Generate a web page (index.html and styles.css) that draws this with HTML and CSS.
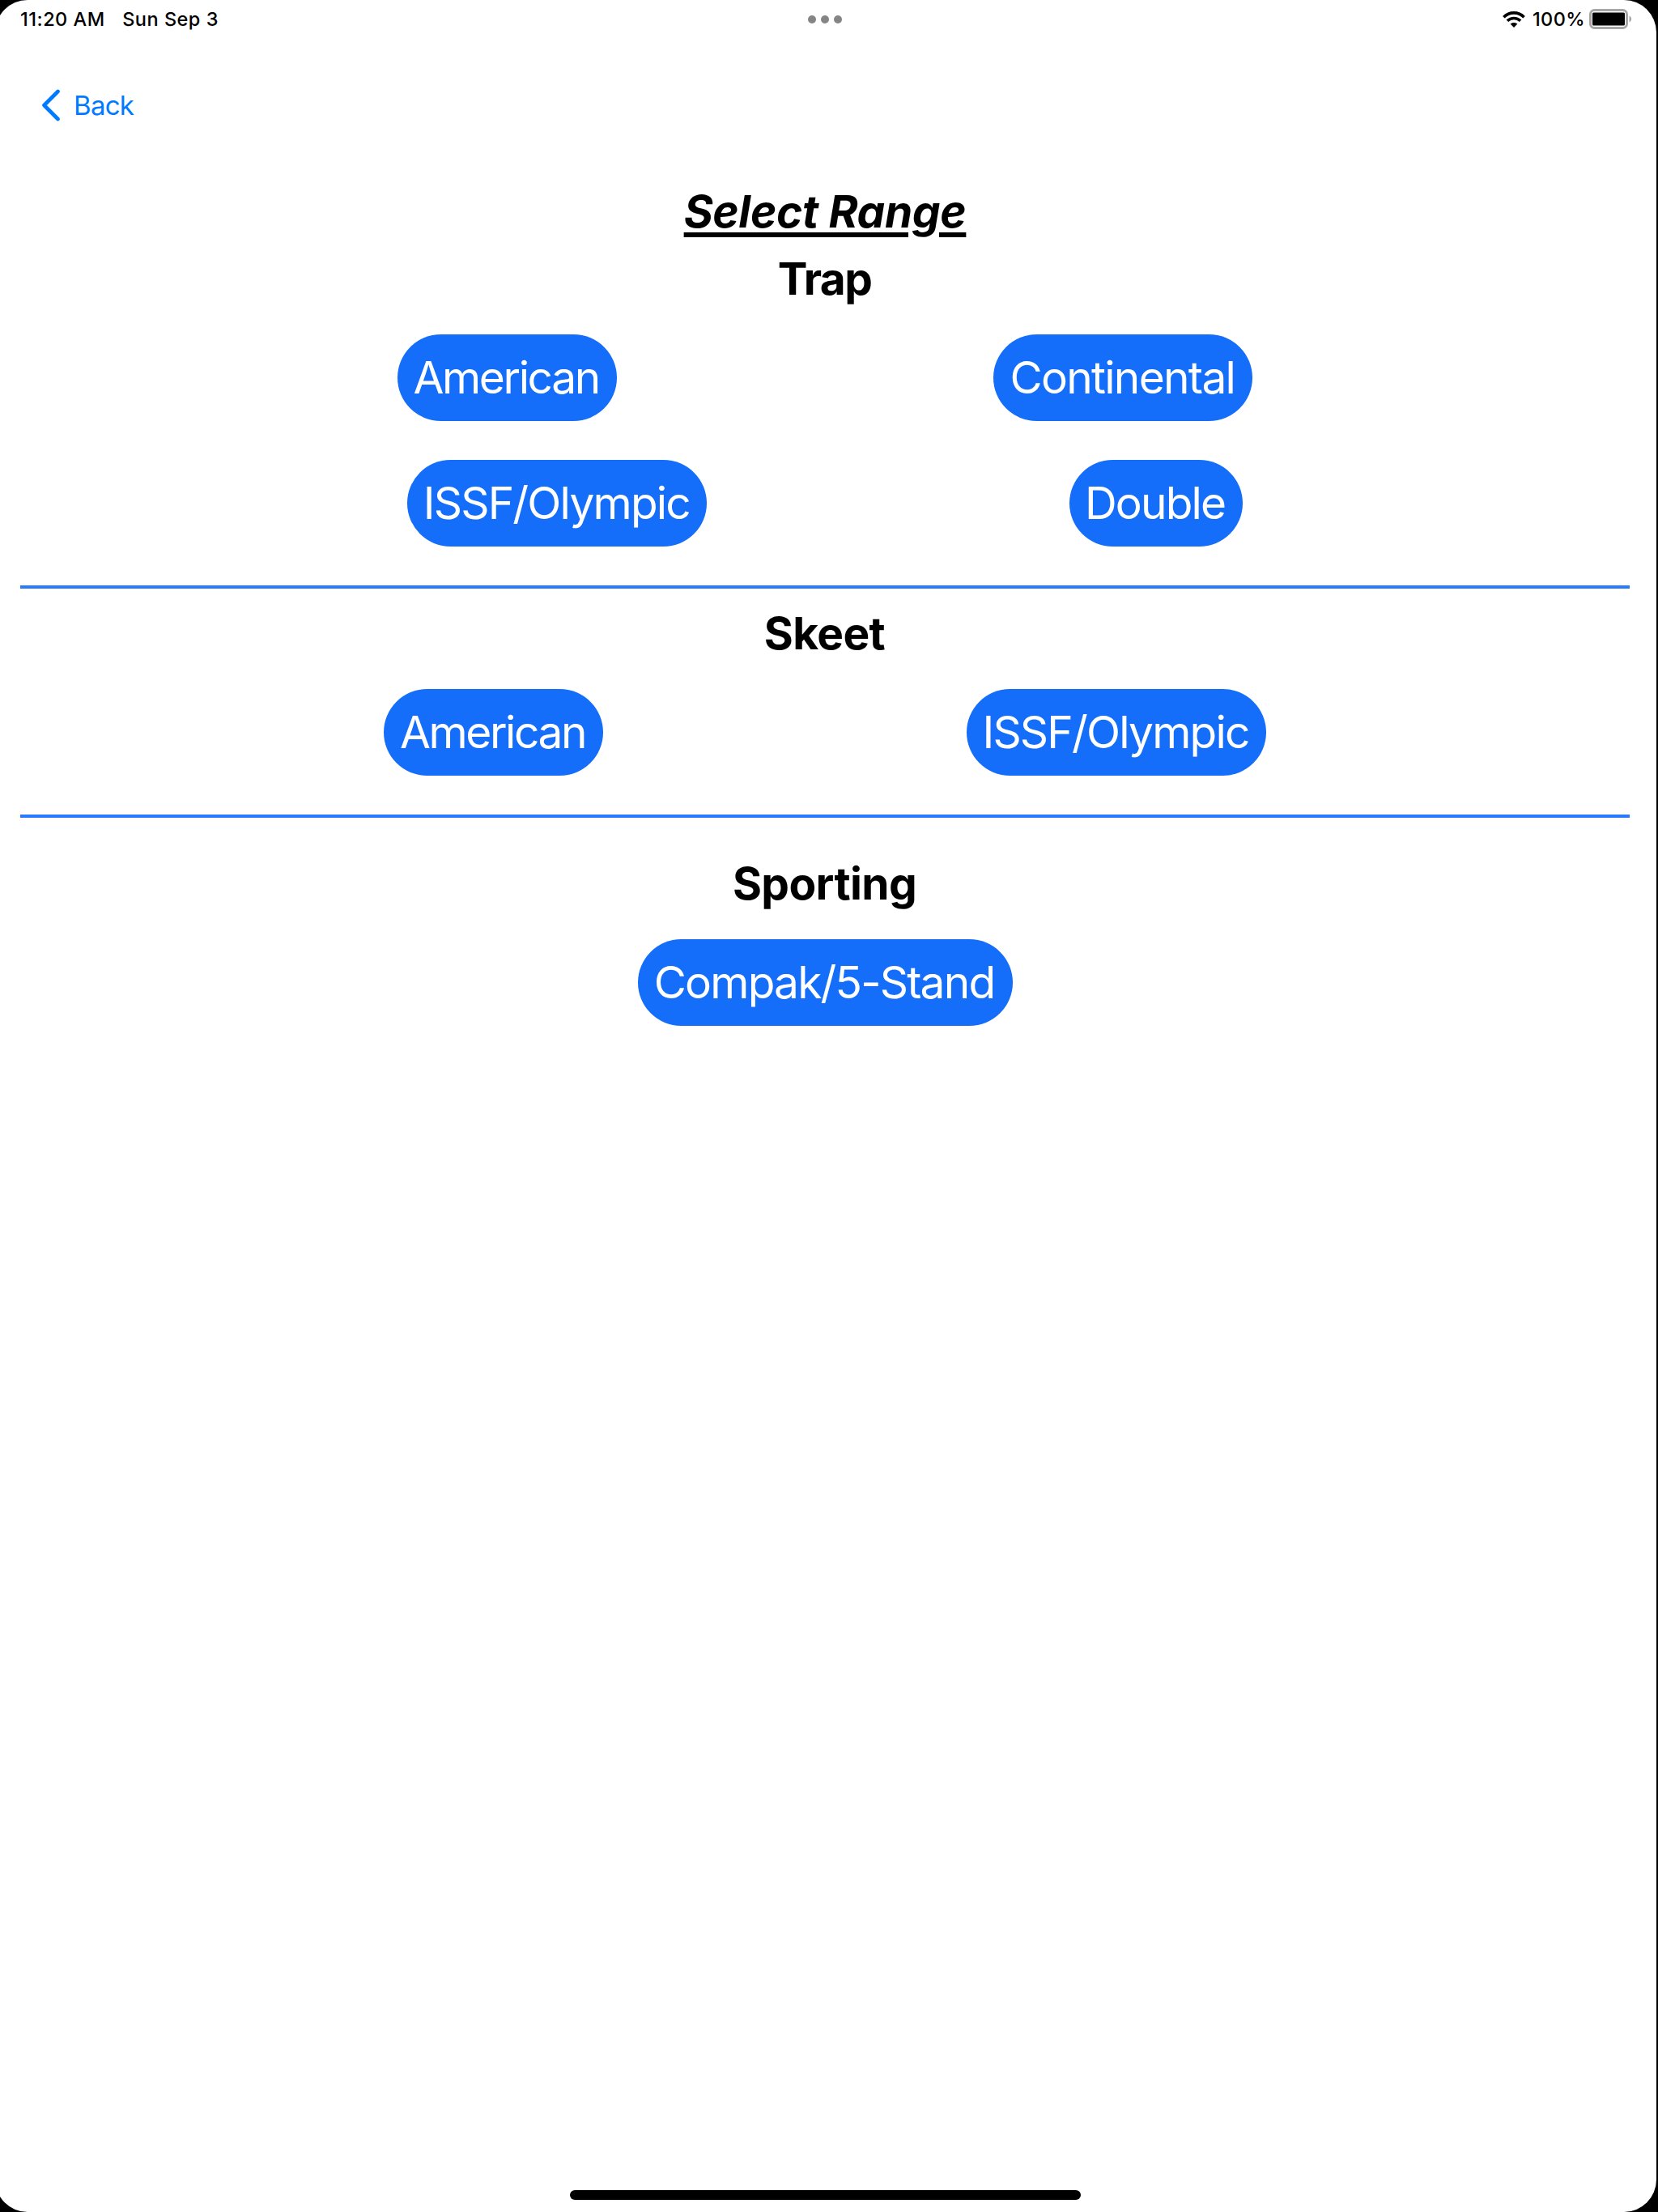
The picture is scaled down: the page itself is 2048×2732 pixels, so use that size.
FILE: index.html
```html
<!DOCTYPE html>
<html lang="en">
<head>
<meta charset="utf-8">
<title>Select Range</title>
<link rel="stylesheet" href="styles.css">
</head>
<body>
<div class="screen">
  <header class="status">
    <div class="status-left"><span class="time">11:20 AM</span><span class="date">Sun Sep 3</span></div>
    <div class="dots"><i></i><i></i><i></i></div>
    <div class="status-right">
      <svg class="wifi" viewBox="0 0 28 20"><g fill="none" stroke="#000" stroke-width="3.7"><path d="M1.4 7.2C8.4.2 19.6.2 26.6 7.2"/><path d="M5.9 11.8c4.5-4.4 11.7-4.4 16.2 0"/></g><path d="M9.6 15.6c2.5-2.3 6.3-2.3 8.8 0L14 20z"/></svg>
      <span class="percent">100%</span>
      <svg class="battery" viewBox="0 0 54 26"><rect x="1.500" y="1.500" width="45" height="22" rx="5" fill="none" stroke="#a6a6a6" stroke-width="3"/><rect x="4" y="4.500" width="40" height="16" rx="1.500"/><path d="M49.500 8.500c3.500 1.400 3.500 6.600 0 8z" fill="#a6a6a6"/></svg>
    </div>
  </header>
  <nav class="nav">
    <a class="back"><svg class="chevron" viewBox="0 0 24 40"><path d="M20.500 3 3.500 20l17 17" fill="none" stroke="#007aff" stroke-width="4.600" stroke-linecap="round" stroke-linejoin="round"/></svg><span class="back-label">Back</span></a>
  </nav>
  <main class="content">
    <h1 class="title">Select Range</h1>
    <h2 class="heading trap">Trap</h2>
    <div class="row"><a class="pill american"><span>American</span></a><a class="pill continental"><span>Continental</span></a></div>
    <div class="row inset"><a class="pill olympic"><span>ISSF/Olympic</span></a><a class="pill double"><span>Double</span></a></div>
    <div class="rule"></div>
    <h2 class="heading skeet">Skeet</h2>
    <div class="row"><a class="pill american"><span>American</span></a><a class="pill olympic"><span>ISSF/Olympic</span></a></div>
    <div class="rule"></div>
    <h2 class="heading sporting">Sporting</h2>
    <div class="row"><a class="pill compak"><span>Compak/5-Stand</span></a></div>
  </main>
  <div class="home"></div>
</div>
</body>
</html>
```
FILE: styles.css
```css
* { box-sizing: border-box; }
body { margin: 0; background: #000; overflow: hidden; font-family: Inter, "Liberation Sans", sans-serif; color: #000; }
.screen { width: 2052px; height: 2732px; margin-left: -6px; padding: 0 0 15px 6px; background: #fff; border-radius: 40px; display: flex; flex-direction: column; }
.status { height: 48px; display: grid; grid-template-columns: 1fr auto 1fr; width: 2038px; align-items: center; font-size: 23.5px; font-weight: 500; }
.status-left { display: flex; padding: 0 0 1px 25px; gap: 21.5px; letter-spacing: 0.5px; }
.dots { display: flex; gap: 6px; }
.dots i { width: 10px; height: 10px; border-radius: 50%; background: #858585; }
.status-right { display: flex; justify-content: flex-end; align-items: center; padding-right: 21px; }
.wifi { width: 28px; height: 20px; margin-right: 9px; }
.percent { letter-spacing: 0.4px; padding-bottom: 1px; }
.battery { width: 54px; height: 26px; margin-left: 5px; }
.nav { height: 164px; padding: 62px 0 0 51px; }
.back { display: inline-flex; align-items: center; gap: 16px; color: #007aff; font-size: 33px; letter-spacing: -0.7px; }
.chevron { width: 24px; height: 40px; }
.content { width: 1988px; margin-left: 25px; display: flex; flex-direction: column; flex: 1; }
.title, .heading { margin: 0; text-align: center; font-size: 55px; font-weight: 700; line-height: 66px; white-space: nowrap; }
.title { margin-top: 16px; font-style: italic; letter-spacing: -0.35px; text-decoration: underline; text-decoration-thickness: 6px; text-underline-offset: 6px; }
.heading { letter-spacing: -0.6px; padding-right: 1px; }
.trap { margin: 17px 0 36px; letter-spacing: -1.6px; }
.row { display: flex; justify-content: space-evenly; margin-bottom: 48px; }
.inset { padding: 0 31px; }
.pill { height: 107px; padding-right: 2px; border-radius: 54px; background: #146efa; color: #fff; font-size: 55px; line-height: 107px; letter-spacing: -1.8px; display: flex; justify-content: center; white-space: nowrap; }
.american { width: 271px; letter-spacing: -2.4px; }
.continental { width: 320px; letter-spacing: -1.7px; }
.olympic { width: 370px; }
.double { width: 214px; }
.compak { width: 463px; }
.rule { height: 4px; background: #2a7bfb; }
.skeet { margin: 22px 0 36px; }
.sporting { margin: 48px 0 36px; }
.home { width: 631px; height: 12px; border-radius: 6px; background: #000; margin-left: 704px; }
```
